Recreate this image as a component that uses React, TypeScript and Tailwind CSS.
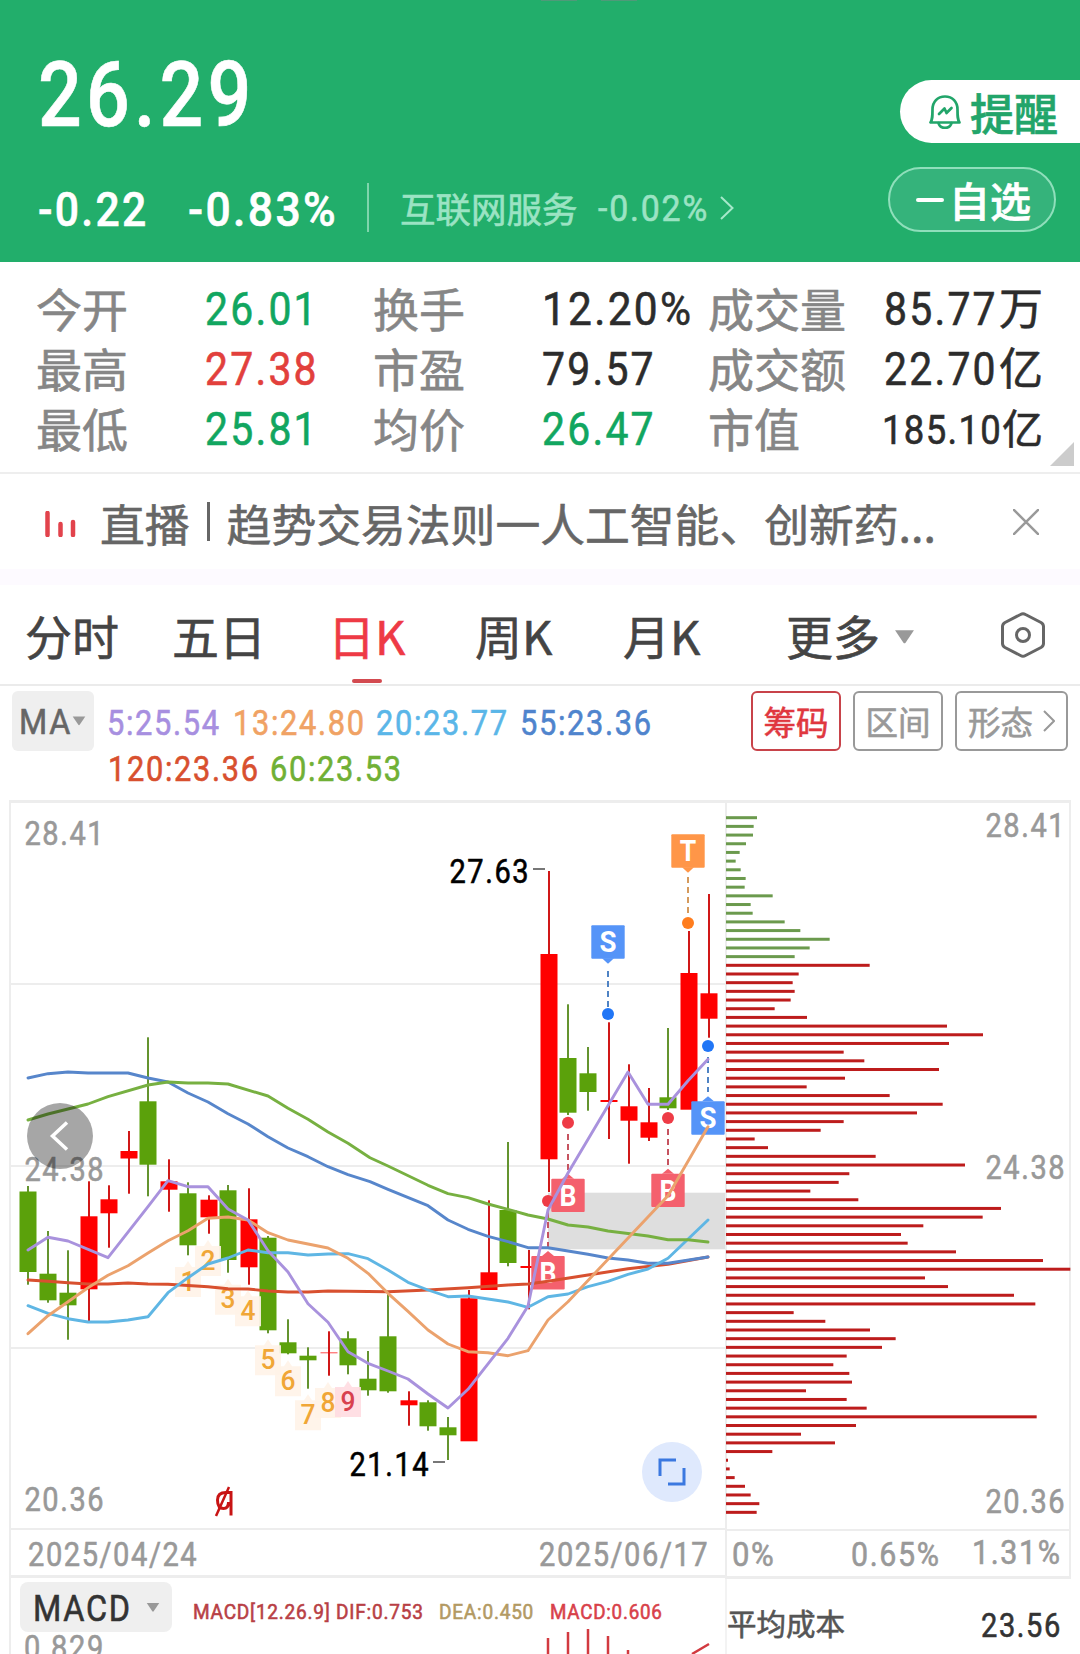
import React from "react";
import clsx from "clsx";

type Pt = [number, number];

const UP = "#ff0000";
const DOWN = "#5ba10b";
const WICK_UP = "#d01818";
const WICK_DOWN = "#64942f";

// Tall, narrow numerals used for every quote figure.
function Num({ children, className }: { children: React.ReactNode; className?: string }) {
  return (
    <span
      className={clsx(
        "inline-block origin-left scale-x-[0.88] whitespace-nowrap font-['Roboto',sans-serif] leading-none tracking-[0.054em] [-webkit-text-stroke:0.6px_currentColor]",
        className,
      )}
    >
      {children}
    </span>
  );
}

function SvgNum({ x, y, size, fill, children }: { x: number; y: number; size: number; fill: string; children: string }) {
  return (
    <text
      transform={`translate(${x} ${y}) scale(0.892 1)`}
      fontSize={size}
      fill={fill}
      stroke={fill}
      strokeWidth="0.6"
      className="font-['Roboto',sans-serif] tracking-[0.054em]"
    >
      {children}
    </text>
  );
}

// x, high, low, body top, body bottom, rising
const candles: [number, number, number, number, number, boolean][] = [
  [28, 1186, 1284.7, 1191.5, 1272, false],
  [48, 1231, 1302.7, 1273.7, 1300.3, false],
  [68, 1250.3, 1339.7, 1292.7, 1305.3, false],
  [89, 1181.3, 1321, 1216.3, 1289.3, true],
  [109, 1185.3, 1247.7, 1199.3, 1213.3, true],
  [129, 1131, 1193.7, 1151, 1158.5, true],
  [148, 1037.3, 1196.3, 1101.3, 1164.7, false],
  [169, 1159.3, 1211.7, 1181.3, 1189.7, true],
  [188, 1182.3, 1255.3, 1193.3, 1245.3, false],
  [209, 1195.3, 1233.7, 1199.7, 1217.3, true],
  [228, 1185, 1272.7, 1190.3, 1260, false],
  [249, 1188.3, 1284.7, 1219.3, 1267.3, true],
  [268, 1236, 1333.3, 1237.7, 1330.3, false],
  [288, 1319.3, 1354.3, 1342.3, 1353.3, false],
  [308, 1347.3, 1388.7, 1355.7, 1360.3, false],
  [329, 1331.3, 1375.7, 1352.3, 1353.3, true],
  [348, 1331.3, 1374.3, 1338.3, 1365.3, false],
  [368, 1351, 1395.7, 1378.7, 1390.3, false],
  [388, 1293.3, 1392.7, 1336.3, 1391.3, false],
  [409, 1391.3, 1425.7, 1400.3, 1405.3, true],
  [428, 1400.3, 1430.7, 1402.3, 1426.3, false],
  [448, 1417, 1460, 1427.3, 1435.3, false],
  [469, 1290, 1441, 1298.3, 1441.3, true],
  [489, 1200.3, 1290, 1272.3, 1290, true],
  [508, 1142, 1266.3, 1210, 1263, false],
  [529, 1250, 1309.3, 1266, 1268, true],
  [549, 871, 1192, 954, 1159.3, true],
  [568, 1004.3, 1115, 1058, 1112.7, false],
  [588, 1047, 1110.7, 1073.3, 1092, false],
  [609, 1022.3, 1139, 1100, 1102, true],
  [629, 1064.3, 1163.7, 1106.3, 1120.7, true],
  [649, 1088, 1141, 1122.3, 1137.7, true],
  [668, 1028, 1110, 1097.3, 1108.3, false],
  [689, 931, 1109, 973, 1109.7, true],
  [709, 894, 1037.7, 993.3, 1018.7, true],
];

const lines: { color: string; pts: Pt[] }[] = [
  { color: "#d8502f", pts: [[28, 1280], [48, 1281.3], [68, 1282.7], [88, 1284], [108, 1284], [128, 1283], [148, 1284], [168, 1284.3], [208, 1286.7], [228, 1288.7], [248, 1289], [268, 1291], [288, 1292], [308, 1292], [328, 1291], [388, 1291.7], [428, 1290], [468, 1287.7], [508, 1285], [528, 1284], [548, 1281.3], [588, 1275], [628, 1268.7], [668, 1264.3], [708, 1257]] },
  { color: "#5786cb", pts: [[28, 1078], [48, 1073.7], [68, 1072], [88, 1073], [128, 1073], [148, 1078], [168, 1082], [188, 1093], [208, 1102], [228, 1113.7], [248, 1124], [268, 1136.7], [288, 1148], [308, 1156.7], [328, 1166.7], [348, 1174.7], [370, 1181.7], [388, 1189.3], [428, 1205.7], [448, 1220], [468, 1229.3], [488, 1236.3], [508, 1241.7], [528, 1247.7], [548, 1247.7], [588, 1254.3], [608, 1258], [628, 1260], [648, 1263.3], [668, 1263.3], [708, 1257]] },
  { color: "#5fb6e4", pts: [[28, 1305.7], [48, 1313.3], [68, 1318.7], [88, 1322], [108, 1322], [128, 1320], [148, 1316.7], [168, 1292.7], [188, 1277.7], [208, 1264], [228, 1258], [248, 1250], [268, 1252.7], [288, 1252.7], [308, 1255], [328, 1254], [348, 1253.7], [368, 1258.7], [388, 1270], [408, 1282.3], [428, 1290], [448, 1296.7], [468, 1296], [508, 1302], [528, 1307.3], [548, 1296.7], [568, 1294], [588, 1286.7], [608, 1281.3], [628, 1274.3], [648, 1269], [668, 1258.3], [708, 1220]] },
  { color: "#77b041", pts: [[28, 1120], [48, 1114], [68, 1109], [88, 1104], [108, 1096.7], [148, 1085], [168, 1082], [188, 1083], [208, 1083], [228, 1084], [268, 1096], [288, 1108.3], [308, 1119.3], [328, 1132], [348, 1143.3], [370, 1157.7], [388, 1166], [428, 1185.3], [448, 1193.7], [468, 1197.7], [488, 1204], [508, 1209.3], [528, 1215], [548, 1219], [568, 1225], [588, 1227], [608, 1231], [648, 1236], [668, 1239.7], [688, 1239.7], [708, 1242]] },
  { color: "#eba26d", pts: [[28, 1333.7], [48, 1315.7], [68, 1301.7], [88, 1287.7], [108, 1275.3], [128, 1265.7], [148, 1253], [168, 1240.7], [188, 1230.7], [208, 1218.3], [228, 1217], [248, 1220], [268, 1232.7], [288, 1240], [308, 1244], [328, 1248], [348, 1258.3], [368, 1273.3], [388, 1293.3], [408, 1311.3], [428, 1330], [448, 1344], [468, 1351.7], [488, 1352.7], [508, 1355.7], [528, 1350.7], [548, 1320], [568, 1301.7], [668, 1195.7], [708, 1126.7]] },
  { color: "#a992dd", pts: [[28, 1250], [48, 1237.3], [68, 1241], [108, 1257.7], [148, 1206.7], [168, 1180.7], [188, 1186.7], [208, 1186.7], [228, 1209], [248, 1220], [268, 1250.7], [288, 1272], [308, 1303.7], [328, 1322.3], [348, 1351.7], [368, 1363.3], [388, 1371], [408, 1379], [428, 1394], [448, 1408], [468, 1389.3], [508, 1338.3], [528, 1306], [548, 1210], [568, 1173], [628, 1072], [648, 1104.3], [668, 1104.3], [688, 1080.7], [708, 1059.3]] },
];

// digit, centre x, top of the digit
const counts: [string, number, number][] = [
  ["1", 188, 1270], ["2", 208, 1249], ["3", 228, 1287.7], ["4", 248, 1299.3], ["5", 268, 1348.3],
  ["6", 288, 1369.3], ["7", 308, 1403.3], ["8", 328, 1391], ["9", 348, 1390],
];

// letter, centre x, box top, pointer side, colour, dot y, dot colour, dash start, dash end, dash colour
const markers: [string, number, number, "up" | "down", string, number, string, number, number, string][] = [
  ["T", 688, 834.3, "down", "#ff9648", 923, "#ff7d1e", 877, 913, "#d59a5c"],
  ["S", 608, 925.3, "down", "#5594f8", 1014, "#2176f6", 971, 1009, "#4f83c4"],
  ["S", 708, 1101.3, "up", "#5594f8", 1046, "#2176f6", 1057, 1092, "#4f83c4"],
  ["B", 568, 1178.7, "up", "#f4606d", 1122.7, "#ee3b46", 1134, 1170, "#c65360"],
  ["B", 668, 1173.7, "up", "#f4606d", 1118, "#ee3b46", 1129, 1165, "#c65360"],
  ["B", 548, 1256, "up", "#f4606d", 1201, "#ee3b46", 1212, 1248, "#c65360"],
];

const chips = [
  93, 83, 81, 60, 41, 29, 44, 59, 56, 140, 74, 80, 176, 223, 311, 251, 206, 431, 218, 200, 206, 194, 146, 243, 663, 771, 669, 353,
  415, 639, 357, 242, 491, 650, 573, 353, 284, 86, 126, 449, 717, 370, 338, 253, 397, 825, 770, 592, 525, 545, 690, 951, 1033,
  597, 666, 864, 928, 203, 298, 432, 509, 468, 362, 322, 370, 378, 240, 362, 422, 932, 390, 225, 327, 139, 6, 11, 26, 57, 74, 100, 92,
];

function KLineChart() {
  return (
    <svg width="725" height="731" viewBox="0 800 725 731" className="block">
      <g fill="#ededed">
        <rect x="9" y="800" width="716" height="3" />
        <rect x="9" y="800" width="2" height="731" />
        {[983, 1165, 1347].map((y) => <rect key={y} x="10" y={y} width="715" height="2" />)}
        <rect x="9" y="1528" width="716" height="2" />
      </g>
      <rect x="548" y="1192.7" width="177" height="56.6" fill="#dedede" />
      <SvgNum x={24.5} y={845} size={32.5} fill="#999">28.41</SvgNum>
      <SvgNum x={24.5} y={1181} size={32.5} fill="#999">24.38</SvgNum>
      <SvgNum x={24.5} y={1510.7} size={32.5} fill="#999">20.36</SvgNum>
      {candles.map(([x, hi, lo, top, bot, up]) => (
        <g key={x}>
          <rect x={x - 1} y={hi} width="2" height={lo - hi} fill={up ? WICK_UP : WICK_DOWN} />
          <rect x={x - 8.5} y={top} width="17" height={bot - top} fill={up ? UP : DOWN} opacity={bot - top < 1.5 ? 0.7 : 1} />
        </g>
      ))}
      {counts.map(([n, x, y]) => (
        <g key={n}>
          <path d={`M${x - 13} ${y - 3}H${x - 4}L${x} ${y - 9}L${x + 4} ${y - 3}H${x + 13}V${y + 27}H${x - 13}Z`} fill={n === "9" ? "#ffdbe1" : "#fff3e8"} opacity="0.9" />
          <text x={x} y={y + 20.5} fontSize="28.5" fontWeight="500" textAnchor="middle" fill={n === "9" ? "#d8414f" : "#f0a636"} className="font-['Roboto',sans-serif]" textLength="15" lengthAdjust="spacingAndGlyphs">{n}</text>
        </g>
      ))}
      {markers.map(([t, x, y, dir, color, dotY, dotColor, d0, d1, dash]) => (
        <g key={`${t}${x}`}>
          <line x1={x} x2={x} y1={d0} y2={d1} stroke={dash} strokeWidth="2" strokeDasharray="6 4" />
          <circle cx={x} cy={dotY} r="6" fill={dotColor} />
          <rect x={x - 16.7} y={y} width="33.4" height="33.4" rx="1" fill={color} />
          <path d={dir === "up" ? `M${x - 6} ${y}L${x} ${y - 5}L${x + 6} ${y}Z` : `M${x - 6} ${y + 33}L${x} ${y + 38.5}L${x + 6} ${y + 33}Z`} fill={color} />
          <text x={x} y={y + 27} fontSize="29" fontWeight="700" textAnchor="middle" fill="#fff" className="font-['Roboto',sans-serif]" textLength={t === "T" ? 16.5 : 17} lengthAdjust="spacingAndGlyphs">{t}</text>
        </g>
      ))}
      {lines.map((l) => (
        <polyline key={l.color} points={l.pts.map((p) => p.join(",")).join(" ")} fill="none" stroke={l.color} strokeWidth="2.9" strokeLinejoin="round" strokeLinecap="round" />
      ))}
      <SvgNum x={449.5} y={883} size={32.5} fill="#000">27.63</SvgNum>
      <path d="M533 869H545M433 1462H445" stroke="#777" strokeWidth="2" />
      <SvgNum x={349.5} y={1475.7} size={32.5} fill="#000">21.14</SvgNum>
      <g stroke="#c81414" fill="none">
        <path d="M231 1515.500V1492.500H226C220 1492.500 217.500 1495 217.500 1500C217.500 1505.500 219.500 1508.500 223.500 1508.500C227 1508.500 228.500 1506 228.500 1502" strokeWidth="3" />
        <path d="M216 1516L229 1487" strokeWidth="2.500" />
      </g>
      <circle cx="60" cy="1136" r="33" fill="#000" opacity="0.35" />
      <path d="M67 1122.500L52.500 1136L67 1149.500" fill="none" stroke="#fff" strokeWidth="3.500" />
      <circle cx="672" cy="1472" r="30" fill="#dfe9fd" />
      <path d="M676 1460H660V1476M684 1468V1484H668" fill="none" stroke="#3b78e0" strokeWidth="3" />
    </svg>
  );
}

function ChipChart() {
  return (
    <svg width="355" height="731" viewBox="725 800 355 731" className="block">
      <g fill="#ededed">
        <rect x="725" y="800" width="346" height="3" />
        <rect x="725" y="800" width="2" height="731" />
        <rect x="1069" y="800" width="2" height="731" />
        <rect x="725" y="1529" width="346" height="2" />
      </g>
      <SvgNum x={985.5} y={837} size={32.5} fill="#999">28.41</SvgNum>
      <SvgNum x={985.5} y={1179} size={32.5} fill="#999">24.38</SvgNum>
      <SvgNum x={985.5} y={1513} size={32.5} fill="#999">20.36</SvgNum>
      {chips.map((w, i) => (
        <rect key={i} x="726" y={817.7 - 1.5 + i * 8.683} width={w / 3} height="3" fill={i < 17 ? "#6b9a4d" : "#bd1c1c"} />
      ))}
    </svg>
  );
}

function Stat({ label, value, unit, tone, small, wide }: { label: string; value: string; unit?: string; tone?: "up" | "down"; small?: boolean; wide?: boolean }) {
  return (
    <div className="flex h-[60px] items-center">
      <span className={clsx("shrink-0 text-[46px] leading-none text-[#868686]", unit ? "w-[176px]" : "w-[169px]")}>{label}</span>
      <span className={clsx("flex items-baseline", unit ? "mt-[3px]" : "mt-[5px]", tone === "up" ? "text-[#e2403c]" : tone === "down" ? "text-[#11a660]" : "text-[#2c2c2c]")}>
        {unit ? (
          <>
            <span className="w-[115px]"><Num className={small ? "-ml-[2px] tracking-[0.036em]! text-[41.500px]" : "text-[46.500px]"}>{value}</Num></span>
            <span className={clsx("leading-none", small ? "ml-[3px] text-[41px]" : "text-[44px]")}>{unit}</span>
          </>
        ) : (
          <Num className={clsx("text-[46.500px]", wide && "scale-x-[0.912]!")}>{value}</Num>
        )}
      </span>
    </div>
  );
}

function Caret({ className }: { className?: string }) {
  return (
    <svg viewBox="0 0 20 13" className={className} fill="#999"><path d="M1 0H19L11 12Q10 13 9 12Z" /></svg>
  );
}

export default function App() {
  return (
    <div className="h-[1654px] w-[1080px] overflow-hidden bg-white font-['Noto_Sans_CJK_SC',sans-serif] [-webkit-text-stroke:0.6px_currentColor]">
      <header className="relative flex h-[262px] justify-between bg-[#22ae6b]">
        <div className="absolute left-[541px] top-0 flex gap-6">
          <i className="h-px w-9 bg-[#4f9a79]" />
          <i className="h-px w-9 bg-[#4f9a79]" />
        </div>
        <div className="pl-[38px] pt-[50px] text-white">
          <Num className="block! w-[300px] scale-x-[0.852]! text-[90.500px] font-medium">26.29</Num>
          <div className="mt-[42px] flex h-[50px] items-center leading-none">
            <span className="w-[150px]"><Num className="mt-[6px] text-[48.500px] font-medium">-0.22</Num></span>
            <span className="w-[179px]"><Num className="mt-[6px] scale-x-[0.915]! text-[48.500px] font-medium">-0.83%</Num></span>
            <i className="h-[49px] w-[2px] bg-[#7fd5ac]" />
            <span className="ml-[31px] w-[198px] text-[35.500px] leading-none text-[#9be3c3]">互联网服务</span>
            <span className="w-[122px] text-[#9be3c3]"><Num className="mt-[3px] scale-x-[0.94]! text-[36px]">-0.02%</Num></span>
            <svg viewBox="0 0 14 24" className="h-6 w-3.5" fill="none" stroke="#a6e8ca" strokeWidth="2"><path d="M1 1L12.500 12L1 23" /></svg>
          </div>
        </div>
        <div className="flex flex-col items-end pt-[80px]">
          <div className="flex h-[63px] w-[180px] items-center rounded-l-full bg-white pl-[29px] text-[#22a56a]">
            <svg viewBox="0 0 32 34" className="mt-px h-[34px] w-8 shrink-0" fill="none" stroke="currentColor" strokeWidth="2.700" strokeLinejoin="round" strokeLinecap="round">
              <path d="M1.500 27.500H30.500C28.500 24.500 28.500 22 28.500 14.500C28.500 7 23.500 1.500 16 1.500S3.500 7 3.500 14.500C3.500 22 3.500 24.500 1.500 27.500Z" />
              <path d="M9.500 28C11 34.500 21 34.500 22.500 28" />
              <path d="M10 19L15.500 13.500L17.500 18L22.500 13" />
            </svg>
            <span className="ml-[9px] text-[44px] font-medium leading-none">提醒</span>
          </div>
          <div className="mr-6 mt-[24px] flex h-[65px] w-[168px] items-center rounded-full border-2 border-[#8fdfbb] bg-[#35b37b] pl-[26px] text-white">
            <i className="h-[4px] w-7 rounded-full bg-white" />
            <span className="ml-[5px] text-[41px] font-medium leading-none">自选</span>
          </div>
        </div>
      </header>

      <section className="relative grid h-[212px] auto-rows-[60px] grid-cols-[337px_335px_1fr] content-start border-b-2 border-[#eee] pl-[36px] pt-[15px]">
        <Stat label="今开" value="26.01" tone="down" />
        <Stat label="换手" value="12.20%" wide />
        <Stat label="成交量" value="85.77" unit="万" />
        <Stat label="最高" value="27.38" tone="up" />
        <Stat label="市盈" value="79.57" />
        <Stat label="成交额" value="22.70" unit="亿" />
        <Stat label="最低" value="25.81" tone="down" />
        <Stat label="均价" value="26.47" tone="down" />
        <Stat label="市值" value="185.10" unit="亿" small />
        <svg viewBox="0 0 24 24" className="absolute bottom-[6px] right-[6px] h-6 w-6" fill="#ccc"><path d="M24 0V24H0Z" /></svg>
      </section>

      <section className="flex h-[95px] items-center pl-[45px] pr-[41px]">
        <svg viewBox="0 0 31 26" className="mt-1 h-[26px] w-[31px]" stroke="#e2434c" strokeWidth="4.500" fill="none" strokeLinecap="round"><path d="M2.500 2V24M15.500 13V24M28 11V24" /></svg>
        <p className="ml-[24px] mt-1 flex-1 whitespace-pre text-[44.800px] leading-none text-[#666]">
          <span>直播</span>
          <i className="mx-[17px] inline-block h-[39px] w-[3px] bg-[#666] align-[1px]" />
          <span>趋势交易法则一人工智能、创新药...</span>
        </p>
        <svg viewBox="0 0 26 26" className="h-[26px] w-[26px]" stroke="#999" strokeWidth="2.500"><path d="M0 0L26 26M26 0L0 26" /></svg>
      </section>
      <div className="h-4 bg-[#fdfaff]" />

      <nav className="relative flex h-[101px] items-center border-b-2 border-[#ebebeb] pl-[25px] text-[47px] leading-none text-[#444]">
        <span className="w-[147px]">分时</span>
        <span className="w-[156px]">五日</span>
        <span className="relative w-[147px] text-[#ee3a45]">
          日K
          <i className="absolute -bottom-[25px] left-[24px] h-[4px] w-[30px] rounded-full bg-[#d34a50]" />
        </span>
        <span className="w-[148px]">周K</span>
        <span className="w-[163px]">月K</span>
        <span className="w-[108px]">更多</span>
        <Caret className="mt-[4px] h-[14px] w-[21px]" />
        <svg viewBox="0 0 44 46" className="ml-[86px] mt-px h-[46px] w-11" fill="none" stroke="#666" strokeWidth="3" strokeLinejoin="round">
          <path d="M19.500 2.500Q22 1 24.500 2.500L40 10.500Q42.500 12 42.500 14.500V31.500Q42.500 34 40 35.500L24.500 43.500Q22 45 19.500 43.500L4 35.500Q1.500 34 1.500 31.500V14.500Q1.500 12 4 10.500Z" />
          <circle cx="22" cy="23" r="6.500" />
        </svg>
      </nav>

      <section className="flex h-[114px] pl-3 pt-[5px]">
        <div className="flex h-[60px] w-[82px] items-center rounded-md bg-[#efefef] pl-[7px] leading-none text-[#666]">
          <span className="w-[53px]"><Num className="mt-[4px] scale-x-[0.91]! text-[35.500px]">MA</Num></span>
          <Caret className="h-[10px] w-[14px]" />
        </div>
        <div className="ml-[13px] w-[644px] pt-[11px] leading-none">
          <div className="flex h-[46px] text-[35px]">
            <span className="w-[126px] text-[#a78fe0]"><Num>5:25.54</Num></span>
            <span className="w-[143px] text-[#f0a264]"><Num>13:24.80</Num></span>
            <span className="w-[144px] text-[#5ab6e8]"><Num>20:23.77</Num></span>
            <span className="w-[140px] text-[#4f84cd]"><Num>55:23.36</Num></span>
          </div>
          <div className="flex text-[35px]">
            <span className="w-[163px] pl-[1px] text-[#d8502f]"><Num>120:23.36</Num></span>
            <span className="text-[#70b035]"><Num>60:23.53</Num></span>
          </div>
        </div>
        <div className="flex gap-[12px] text-[32.500px] leading-none text-[#999]">
          <span className="flex h-[60px] w-[90px] items-center justify-center rounded-md border-2 border-[#c8434a] text-[#e0373f]">筹码</span>
          <span className="flex h-[60px] w-[90px] items-center justify-center rounded-md border-2 border-[#999]">区间</span>
          <span className="flex h-[60px] w-[113px] items-center justify-center gap-[10px] rounded-md border-2 border-[#999]">
            形态
            <svg viewBox="0 0 12 22" className="h-[22px] w-3" fill="none" stroke="#999" strokeWidth="2"><path d="M1 1L11 11L1 21" /></svg>
          </span>
        </div>
      </section>

      <main className="grid grid-cols-[725px_355px] text-[#999]">
        <div>
          <KLineChart />
          <div className="ml-[9px] flex h-[47px] justify-between border-b-[3px] border-l-2 border-[#ededed] pl-[17px] pt-[7px] leading-none">
            <Num className="text-[33px]">2025/04/24</Num>
            <span className="w-[186px]"><Num className="text-[33px]">2025/06/17</Num></span>
          </div>
          <div className="ml-[9px] h-[76px] border-l-2 border-[#ededed] pt-1">
            <div className="flex h-[50px] items-center">
              <div className="ml-[9px] flex h-[50px] w-[152px] items-center rounded-lg bg-[#efefef] pl-[13px] leading-none text-[#333]">
                <span className="w-[113px]"><Num className="mt-[3px] scale-x-[0.9]! text-[36px]">MACD</Num></span>
                <Caret className="h-[9px] w-[14px]" />
              </div>
              <div className="ml-[21px] mt-[8px] flex text-[21px] leading-none">
                <span className="w-[246px] text-[#b83f45]"><Num className="scale-x-[0.907]! tracking-[0.04em]!">MACD[12.26.9] DIF:0.753</Num></span>
                <span className="w-[111px] text-[#b39a63]"><Num className="scale-x-[0.907]! tracking-[0.04em]!">DEA:0.450</Num></span>
                <span className="text-[#d8414a]"><Num className="scale-x-[0.895]! tracking-[0.04em]!">MACD:0.606</Num></span>
              </div>
            </div>
            <div className="flex pl-[13px]">
              <Num className="-mt-[1px] w-[100px] text-[33px]">0.829</Num>
              <svg viewBox="530 1628 190 26" className="-mt-[4px] ml-[406px] h-[26px] w-[190px]" stroke="#d23a40" strokeWidth="2.500" fill="none">
                <path d="M548 1638V1654M568 1632V1654M588 1629V1654M608 1636V1654M628 1650V1654M692 1654L709 1644" />
              </svg>
            </div>
          </div>
        </div>
        <div>
          <ChipChart />
          <div className="mr-[9px] flex h-[48px] border-x-2 border-b-[3px] border-[#ededed] pl-[5px] pt-[5px] text-[33px] leading-none">
            <span className="w-[122px]"><Num className="scale-x-[0.94]!">0%</Num></span>
            <span className="w-[123px]"><Num className="scale-x-[0.92]!">0.65%</Num></span>
            <Num className="scale-x-[0.92]!">1.31%</Num>
          </div>
          <div className="flex h-[75px] items-start border-l-2 border-[#f3f3f3] pt-[27px] leading-none">
            <span className="mt-[2px] w-[254px] text-[29.500px] leading-none text-[#555]">平均成本</span>
            <Num className="mt-[3px] text-[33px] text-[#333]">23.56</Num>
          </div>
        </div>
      </main>
    </div>
  );
}
